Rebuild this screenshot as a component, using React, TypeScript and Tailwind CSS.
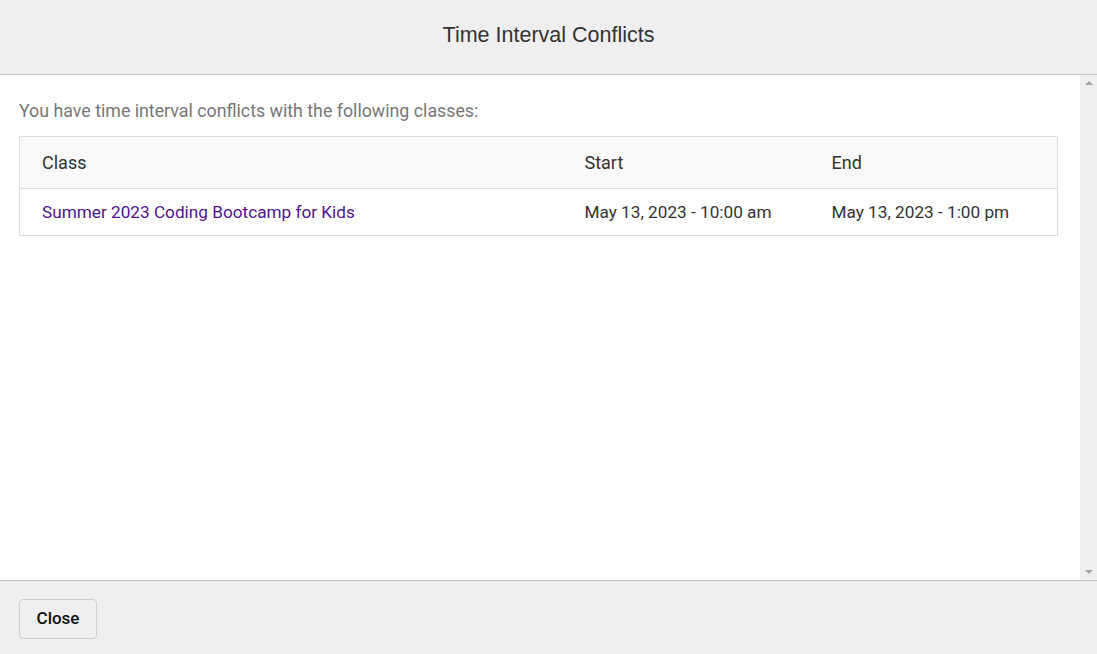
export default function App() {
  return (
    <div className="flex h-[654px] w-[1097px] flex-col bg-[#efefef] font-['Roboto',sans-serif]">
      {/* Header */}
      <div className="flex h-[75px] shrink-0 items-center justify-center border-b border-[#c4c4c4] pb-[4px]">
        <h1 className="font-['Liberation_Sans',Arial,sans-serif] text-[21.5px] text-[#333333]">
          Time Interval Conflicts
        </h1>
      </div>

      {/* Body */}
      <div className="flex min-h-0 flex-1">
        <div className="flex-1 bg-white pl-[19px] pr-[22px] pt-[23px]">
          <p className="mb-[11px] text-[17.8px] text-[#777777]">
            You have time interval conflicts with the following classes:
          </p>
          <table className="w-full border-collapse border border-[#dddddd] text-[17.2px]">
            <thead>
              <tr className="h-[52px] border-b border-[#dddddd] bg-[#f9f9f9] text-left text-[18px] text-[#333333]">
                <th className="w-[543px] pl-[22px] font-normal">Class</th>
                <th className="w-[247px] pl-[22px] font-normal">Start</th>
                <th className="pl-[22px] font-normal">End</th>
              </tr>
            </thead>
            <tbody>
              <tr className="h-[47px] text-[#333333]">
                <td className="pl-[22px] pt-[2px]">
                  <a href="#" className="text-[#4f1390]">
                    Summer 2023 Coding Bootcamp for Kids
                  </a>
                </td>
                <td className="pl-[22px] pt-[2px]">May 13, 2023 - 10:00 am</td>
                <td className="pl-[22px] pt-[2px]">May 13, 2023 - 1:00 pm</td>
              </tr>
            </tbody>
          </table>
        </div>
        {/* Scrollbar */}
        <div className="flex w-[17px] flex-col items-center justify-between bg-[#f0f0f0] py-[6px]">
          <svg width="8" height="4" viewBox="0 0 8 4">
            <path d="M0 4 L4 0 L8 4 Z" fill="#a3a3a3" />
          </svg>
          <svg width="8" height="4" viewBox="0 0 8 4">
            <path d="M0 0 L4 4 L8 0 Z" fill="#a3a3a3" />
          </svg>
        </div>
      </div>

      {/* Footer */}
      <div className="flex h-[74px] shrink-0 items-center border-t border-[#c4c4c4] px-[19px] pt-[2px]">
        <button className="h-[40px] w-[78px] rounded-[4px] border border-[#cfcfcf] bg-[#f0f0f0] pt-[1px] text-[17px] font-medium text-[#111111]">
          Close
        </button>
      </div>
    </div>
  );
}
